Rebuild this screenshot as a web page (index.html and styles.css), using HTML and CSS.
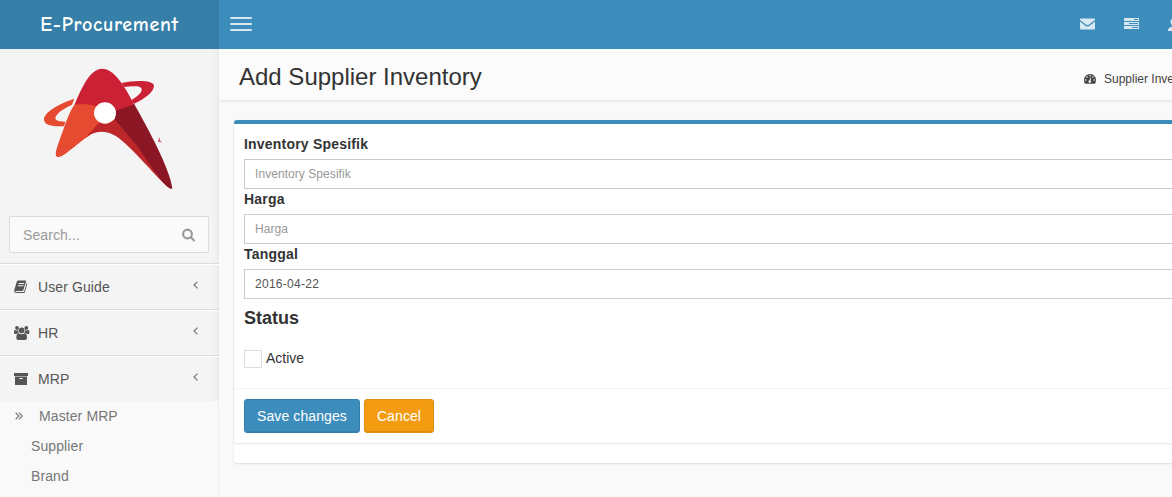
FILE: index.html
```html
<!DOCTYPE html>
<html lang="en">
<head>
<meta charset="utf-8">
<title>E-Procurement</title>
<link rel="stylesheet" href="styles.css">
</head>
<body>
<header class="topbar">
  <a class="brand"><span>E-Procurement</span></a>
  <nav class="navbar">
    <div class="toggle"><i></i><i></i><i></i></div>
    <div class="nav-icons">
      <svg width="15" height="12" viewBox="0 0 15 12"><path d="M0 1.500Q0 .5 1 .5H14Q15 .5 15 1.500V2L8.700 6.800Q7.500 7.700 6.300 6.800L0 2ZM0 3.500L5.800 8Q7.500 9.200 9.200 8L15 3.500V10.500Q15 11.500 14 11.500H1Q0 11.500 0 10.500Z"/></svg>
      <svg width="15" height="12" viewBox="0 0 15 12"><path fill-rule="evenodd" d="M0 0H15V3H0ZM10 1V2H14V1ZM0 4H15V7H0ZM5 5V6H14V5ZM0 8H15V11H0ZM8 9V10H14V9Z"/></svg>
      <svg width="14" height="13" viewBox="0 0 14 13"><path d="M2.500 4Q2.500 0 6 0T9.500 4Q9.500 6 8 7.500V8.500L12 10.500Q13 11.500 13 13H0Q0 10.500 1 9.900L4.200 8.500V7.500Q2.500 6 2.500 4Z"/></svg>
    </div>
  </nav>
</header>
<div class="layout">
  <aside class="sidebar">
    <svg class="logo" width="160" height="145" viewBox="0 0 480 435">
      <path fill="#e64a31" d="M133 131C88 145 43 172 42 192C41 210 64 215 102 214L106 200C80 200 72 194 78 184C85 170 106 159 126 149Z"/>
      <path fill="#cc2034" d="M275 84C310 76 370 74 372 92C373 110 341 133 312 146L304 136C325 122 340 109 334 99C327 91 302 94 282 96Z"/>
      <path fill="#cc2034" d="M133 151C155 98 180 42 216 41C253 41 283 92 313 149L258 180L195 160Z"/>
      <path fill="#e64a31" d="M133 149C160 144 180 148 200 154L226 188L178 242C140 265 105 304 86 306C67 307 83 272 102 218C111 191 122 165 133 149Z"/>
      <path fill="#bd272a" d="M205 205L262 190L340 280L424 402C402 394 354 330 285 265C246 229 213 219 169 245Z"/>
      <path fill="#8b1724" d="M255 169L313 148C351 215 421 343 427 401C411 405 374 352 324 276L255 194Z"/>
      <path fill="#d25a62" d="M388 246L391 258L398 262L384 261Z"/>
      <ellipse cx="225" cy="174" rx="33" ry="32" fill="#fff"/>
    </svg>
    <div class="search"><span>Search...</span>
      <svg width="13" height="14" viewBox="0 0 13 14"><circle cx="5.500" cy="6" r="4.400"/><path d="M8.900 9.300L12.100 12.500"/></svg>
    </div>
    <ul class="menu">
      <li><svg class="ico" width="16" height="14" viewBox="0 0 16 14"><path fill-rule="evenodd" d="M4 .5H11.500Q12.300 .5 12 1.500L9.300 10Q9 11 8 11H1.500Q1 11.800 2 12H9Q10 12 10.300 11L12.800 2.500Q13.400 3 13.200 4L10.900 12Q10.500 13 9.500 13H1.800Q0 12.500 .1 10.500L2.700 2Q3 .7 4 .5ZM4.800 3L4.500 4H10L10.300 3ZM4.100 5.200L3.800 6.200H9.300L9.600 5.200Z"/></svg><span>User Guide</span><svg class="caret" width="5" height="8" viewBox="0 0 5 8"><path d="M4.500 .6L1 4L4.500 7.400"/></svg></li>
      <li><svg class="ico" width="16" height="14" viewBox="0 0 16 14"><circle cx="3" cy="2" r="1.900"/><circle cx="12.300" cy="2" r="1.900"/><circle cx="7.600" cy="4.300" r="2.900"/><path d="M0 7V5Q0 4 1 4Q3 5 4.200 4Q4 6 5 7H4Q3 7 2.600 8H1Q0 8 0 7ZM15.300 7V5Q15.300 4 14.300 4Q12.500 5 11.100 4Q11.300 6 10.300 7H11.300Q12.300 7 12.700 8H14.300Q15.300 8 15.300 7ZM2.300 12Q2.200 7.500 4.700 7.300Q7.600 9.400 10.500 7.300Q13.100 7.500 13 12Q13 14 11 14H4.300Q2.300 14 2.300 12Z"/></svg><span>HR</span><svg class="caret" width="5" height="8" viewBox="0 0 5 8"><path d="M4.500 .6L1 4L4.500 7.400"/></svg></li>
      <li class="open"><svg class="ico" width="16" height="14" viewBox="0 0 16 14"><path fill-rule="evenodd" d="M0 1H14V4H0ZM1 4.500H13V13H1ZM5.300 6V7H8.700V6Z"/></svg><span>MRP</span><svg class="caret" width="5" height="8" viewBox="0 0 5 8"><path d="M4.500 .6L1 4L4.500 7.400"/></svg></li>
    </ul>
    <ul class="submenu">
      <li class="lead"><svg width="8" height="8" viewBox="0 0 8 8"><path d="M.6 .6L3.800 4L.6 7.400M4 .6L7.200 4L4 7.400"/></svg><span>Master MRP</span></li>
      <li>Supplier</li>
      <li>Brand</li>
    </ul>
  </aside>
  <main class="content">
    <div class="page-head">
      <h1>Add Supplier Inventory</h1>
      <div class="crumb">
        <svg width="12" height="10" viewBox="0 0 12 10"><path fill-rule="evenodd" d="M0 6A6 6 0 0 1 12 6Q12 8.300 11 9.700H1Q0 8.300 0 6ZM1 6A.8.8 0 1 0 2.600 6A.8.8 0 1 0 1 6ZM2.200 3A.8.8 0 1 0 3.800 3A.8.8 0 1 0 2.200 3ZM5.200 1.700A.8.8 0 1 0 6.800 1.700A.8.8 0 1 0 5.200 1.700ZM8.200 3A.8.8 0 1 0 9.800 3A.8.8 0 1 0 8.200 3ZM9.400 6A.8.8 0 1 0 11 6A.8.8 0 1 0 9.400 6ZM6.400 3.500L5.600 6.200A1.300 1.300 0 1 0 6.500 6.400L7.200 3.700Z"/></svg>
        <span>Supplier Inventory</span>
      </div>
    </div>
    <section class="box">
      <div class="card">
        <div class="fields">
          <label>Inventory Spesifik</label>
          <input type="text" placeholder="Inventory Spesifik">
          <label>Harga</label>
          <input type="text" placeholder="Harga">
          <label>Tanggal</label>
          <input type="text" class="date" value="2016-04-22">
          <h4>Status</h4>
          <div class="check"><i></i><span>Active</span></div>
        </div>
        <div class="actions">
          <button class="btn save">Save changes</button>
          <button class="btn cancel">Cancel</button>
        </div>
      </div>
    </section>
  </main>
</div>
</body>
</html>
```
FILE: styles.css
```css
* { box-sizing: border-box; }
body { margin: 0; height: 497px; overflow: hidden; font: 14px/20px "Liberation Sans", Arial, sans-serif; color: #333; background: #f9f9f9; }
ul { list-style: none; margin: 0; padding: 0; }
.topbar { display: flex; height: 49px; }
.brand { width: 219px; background: #367fa9; color: #fff; display: flex; justify-content: center; align-items: center; font: 700 20px/30px "Comic Sans MS", "Comic Neue", "Open Sans", sans-serif; letter-spacing: .7px; padding-top: 1px; }
.navbar { flex: 1; min-width: 0; background: #3c8dbc; display: flex; justify-content: space-between; align-items: center; padding-left: 11px; overflow: hidden; }
.toggle { display: flex; flex-direction: column; gap: 4px; padding-bottom: 1px; }
.toggle i { width: 22px; height: 2px; border-radius: 1px; background: #d8e8f2; }
.nav-icons { display: flex; align-items: center; gap: 29px; margin-right: -10px; padding-bottom: 1px; fill: #d8e8f2; }
.nav-icons svg { flex: none; }
.layout { display: flex; height: 448px; }
.sidebar { width: 219px; flex: none; background: #f4f4f4; box-shadow: inset -3px 0 8px -4px rgba(0,0,0,.1); color: #555; }
.logo { display: block; margin: 6px 0 0 30px; }
.search { margin: 16px 10px 10px 9px; height: 37px; border: 1px solid #dbdbdb; border-radius: 2px; background: #fafafa; color: #999; display: flex; align-items: center; justify-content: space-between; padding: 0 13px; letter-spacing: .1px; }
.search svg { fill: none; stroke: #999; stroke-width: 2.1; stroke-linecap: round; }
.menu { border-top: 1px solid #dbdbdb; }
.menu li { height: 46px; border-top: 1px solid #fff; border-bottom: 1px solid #dbdbdb; padding: 0 21px 0 14px; display: flex; align-items: center; }
.menu li.open { height: 45px; border-bottom: 0; }
.menu span { flex: 1; padding-left: 8px; letter-spacing: .1px; }
.ico { fill: #555; }
.caret, .lead svg { fill: none; stroke: #777; stroke-width: 1.2; }
.caret { margin-bottom: 5px; }
.submenu { background: #f9f9f9; border-right: 1px solid #eee; color: #777; height: 96px; letter-spacing: .1px; }
.submenu li { height: 30px; line-height: 30px; padding-left: 31px; }
.submenu .lead { display: flex; align-items: center; padding-left: 15px; gap: 16px; }
.content { flex: 1; min-width: 0; overflow: hidden; }
.page-head { height: 52px; background: #fbfbfb; border-bottom: 1px solid #ebebeb; box-shadow: 0 1px 2px rgba(0,0,0,.05); display: flex; justify-content: space-between; padding: 0 0 0 20px; }
h1 { margin: 0; font-size: 24px; font-weight: 400; line-height: 56px; }
.crumb { width: 88px; display: flex; align-items: center; gap: 8px; font-size: 12px; white-space: nowrap; padding-top: 8px; fill: #444; color: #444; }
.crumb svg { flex: none; }
.box { margin: 19px -20px 0 15px; height: 343px; border-top: 4px solid #3c8dbc; border-radius: 3px; background: #fff; box-shadow: 0 1px 2px rgba(0,0,0,.12); }
.card { height: 319px; border-radius: 3px; box-shadow: 0 1px 2px rgba(0,0,0,.1); }
.fields { height: 265px; padding: 10px 0 0 10px; border-bottom: 1px solid #f4f4f4; }
label { display: block; height: 25px; font-weight: 700; letter-spacing: .2px; }
input { display: block; width: 100%; height: 30px; padding: 5px 10px; border: 1px solid #ccc; border-radius: 0; background: #fff; color: #555; font: 12px/18px "Liberation Sans", Arial, sans-serif; }
input::placeholder { color: #999; opacity: 1; letter-spacing: .06px; }
.date { letter-spacing: .27px; }
h4 { margin: 9px 0 19px; font-size: 18px; line-height: 20px; }
.check { display: flex; align-items: center; gap: 4px; height: 22px; }
.check i { width: 18px; height: 18px; border: 1px solid #ddd; margin-top: 2px; }
.actions { display: flex; gap: 4px; padding: 10px; }
.btn { height: 34px; padding: 6px 0; font: 14px/20px "Liberation Sans", Arial, sans-serif; letter-spacing: .1px; color: #fff; border-radius: 3px; border: 1px solid; box-shadow: inset 0 -1px 0 rgba(0,0,0,.09); white-space: nowrap; }
.save { background: #3c8dbc; border-color: #367fa9; width: 116px; }
.cancel { background: #f39c12; border-color: #e08e0b; width: 70px; }
```
